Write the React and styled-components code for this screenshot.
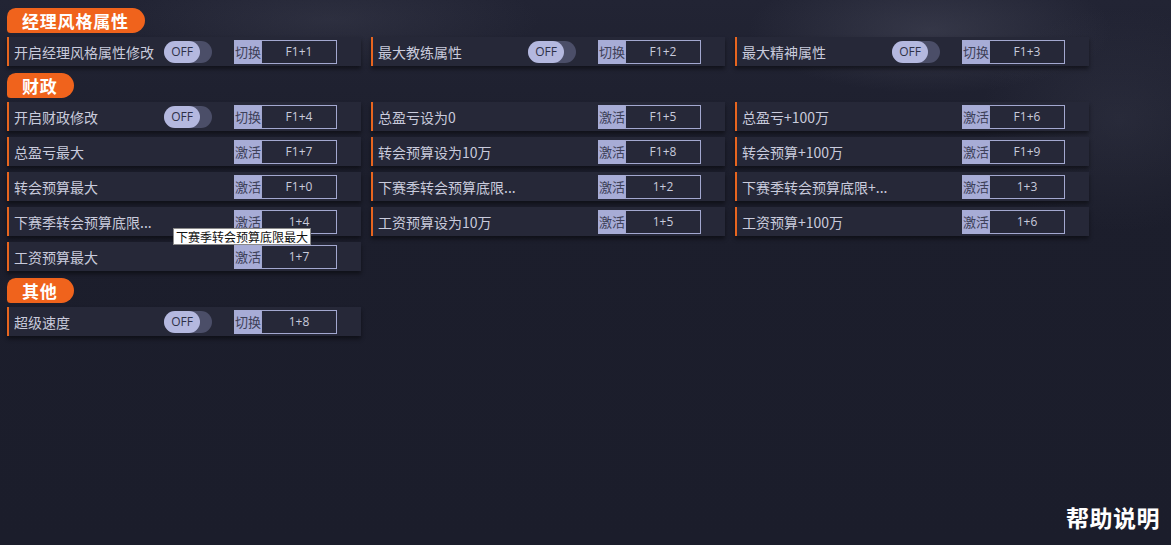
import React from "react";
import styled, { createGlobalStyle } from "styled-components";

const Global = createGlobalStyle`
  html, body { margin: 0; padding: 0; }
  body {
    background: #1b1d2b;
    font-family: "Noto Sans CJK SC", "Noto Sans", sans-serif;
  }
`;

const Page = styled.div`
  position: relative;
  min-height: 100vh;
  box-sizing: border-box;
  padding: 8px 7px 11px 7px;
  display: flex;
  flex-direction: column;
  gap: 7px;
  background:
    radial-gradient(ellipse 260px 90px at 930px 30px, rgba(90, 92, 110, 0.35), transparent 70%),
    radial-gradient(ellipse 300px 70px at 330px 20px, rgba(80, 82, 100, 0.25), transparent 70%),
    radial-gradient(ellipse 200px 160px at 1120px 120px, rgba(70, 72, 90, 0.25), transparent 70%),
    linear-gradient(180deg, #222434 0px, #1c1e2c 180px, #1b1d2b 100%);
`;

const Section = styled.section`
  display: flex;
  flex-direction: column;
  gap: 4px;
`;

const Header = styled.div`
  align-self: flex-start;
  height: 25px;
  box-sizing: border-box;
  padding: 0 16px 0 15px;
  background: #f0631c;
  border-radius: 9px 13px 13px 4px;
  color: #ffffff;
  font-weight: 700;
  font-size: 17px;
  letter-spacing: 0.8px;
  line-height: 25px;
`;

const Grid = styled.div`
  display: grid;
  grid-template-columns: repeat(3, 354px);
  column-gap: 10px;
  row-gap: 6px;
`;

const Row = styled.div`
  position: relative;
  height: 29px;
  box-sizing: border-box;
  border-left: 2px solid #e8651f;
  padding: 0 24px 0 5px;
  background: #262838;
  box-shadow: 0 3px 4px rgba(0, 0, 0, 0.45);
  display: grid;
  grid-template-columns: 1fr 48px 125px;
  align-items: center;
`;

const Label = styled.div`
  color: #c9cbdc;
  font-size: 14px;
  white-space: nowrap;
  overflow: hidden;
`;

const Toggle = styled.div`
  grid-column: 2;
  width: 48px;
  height: 22px;
  border-radius: 11px;
  background: #4b4e68;
  display: flex;
  align-items: center;
`;

const Knob = styled.div`
  width: 36px;
  height: 22px;
  border-radius: 11px;
  background: #b4b8df;
  color: #2d3048;
  font-family: "Open Sans", "Noto Sans", sans-serif;
  font-size: 12px;
  line-height: 22px;
  text-align: center;
`;

const Key = styled.div`
  grid-column: 3;
  margin-left: 22px;
  width: 103px;
  height: 24px;
  margin-top: 1px;
  display: flex;
  box-sizing: border-box;
`;

const KeyTag = styled.div`
  width: 27px;
  background: #a7acd6;
  color: #3d4058;
  font-size: 13px;
  line-height: 24px;
  text-align: left;
  padding-left: 1px;
  box-sizing: border-box;
  white-space: nowrap;
`;

const KeyCode = styled.div`
  flex: 1;
  border: 1px solid #a3a8d0;
  color: #c9cbdc;
  font-family: "Open Sans", "Noto Sans", sans-serif;
  font-size: 12px;
  line-height: 22px;
  text-align: center;
`;

const Tooltip = styled.div`
  position: absolute;
  left: 164px;
  top: 21px;
  z-index: 2;
  background: #ffffff;
  border: 1px solid #8a8a8a;
  color: #111111;
  font-size: 12px;
  line-height: 15px;
  padding: 0 2px;
  white-space: nowrap;
`;

const Help = styled.div`
  margin-top: auto;
  align-self: flex-end;
  margin-right: 4px;
  color: #ffffff;
  font-weight: 700;
  font-size: 23px;
  letter-spacing: 0.5px;
`;

const Item = ({ label, toggle, tag, code, tip }) => (
  <Row>
    <Label>{label}</Label>
    {toggle && (
      <Toggle>
        <Knob>OFF</Knob>
      </Toggle>
    )}
    <Key>
      <KeyTag>{tag}</KeyTag>
      <KeyCode>{code}</KeyCode>
    </Key>
    {tip && <Tooltip>{tip}</Tooltip>}
  </Row>
);

const sections = [
  {
    title: "经理风格属性",
    items: [
      { label: "开启经理风格属性修改", toggle: true, tag: "切换", code: "F1+1" },
      { label: "最大教练属性", toggle: true, tag: "切换", code: "F1+2" },
      { label: "最大精神属性", toggle: true, tag: "切换", code: "F1+3" },
    ],
  },
  {
    title: "财政",
    items: [
      { label: "开启财政修改", toggle: true, tag: "切换", code: "F1+4" },
      { label: "总盈亏设为0", tag: "激活", code: "F1+5" },
      { label: "总盈亏+100万", tag: "激活", code: "F1+6" },
      { label: "总盈亏最大", tag: "激活", code: "F1+7" },
      { label: "转会预算设为10万", tag: "激活", code: "F1+8" },
      { label: "转会预算+100万", tag: "激活", code: "F1+9" },
      { label: "转会预算最大", tag: "激活", code: "F1+0" },
      { label: "下赛季转会预算底限...", tag: "激活", code: "1+2" },
      { label: "下赛季转会预算底限+...", tag: "激活", code: "1+3" },
      { label: "下赛季转会预算底限...", tag: "激活", code: "1+4", tip: "下赛季转会预算底限最大" },
      { label: "工资预算设为10万", tag: "激活", code: "1+5" },
      { label: "工资预算+100万", tag: "激活", code: "1+6" },
      { label: "工资预算最大", tag: "激活", code: "1+7" },
    ],
  },
  {
    title: "其他",
    items: [{ label: "超级速度", toggle: true, tag: "切换", code: "1+8" }],
  },
];

export default function App() {
  return (
    <>
      <Global />
      <Page>
        {sections.map((s) => (
          <Section key={s.title}>
            <Header>{s.title}</Header>
            <Grid>
              {s.items.map((it, i) => (
                <Item key={i} {...it} />
              ))}
            </Grid>
          </Section>
        ))}
        <Help>帮助说明</Help>
      </Page>
    </>
  );
}
